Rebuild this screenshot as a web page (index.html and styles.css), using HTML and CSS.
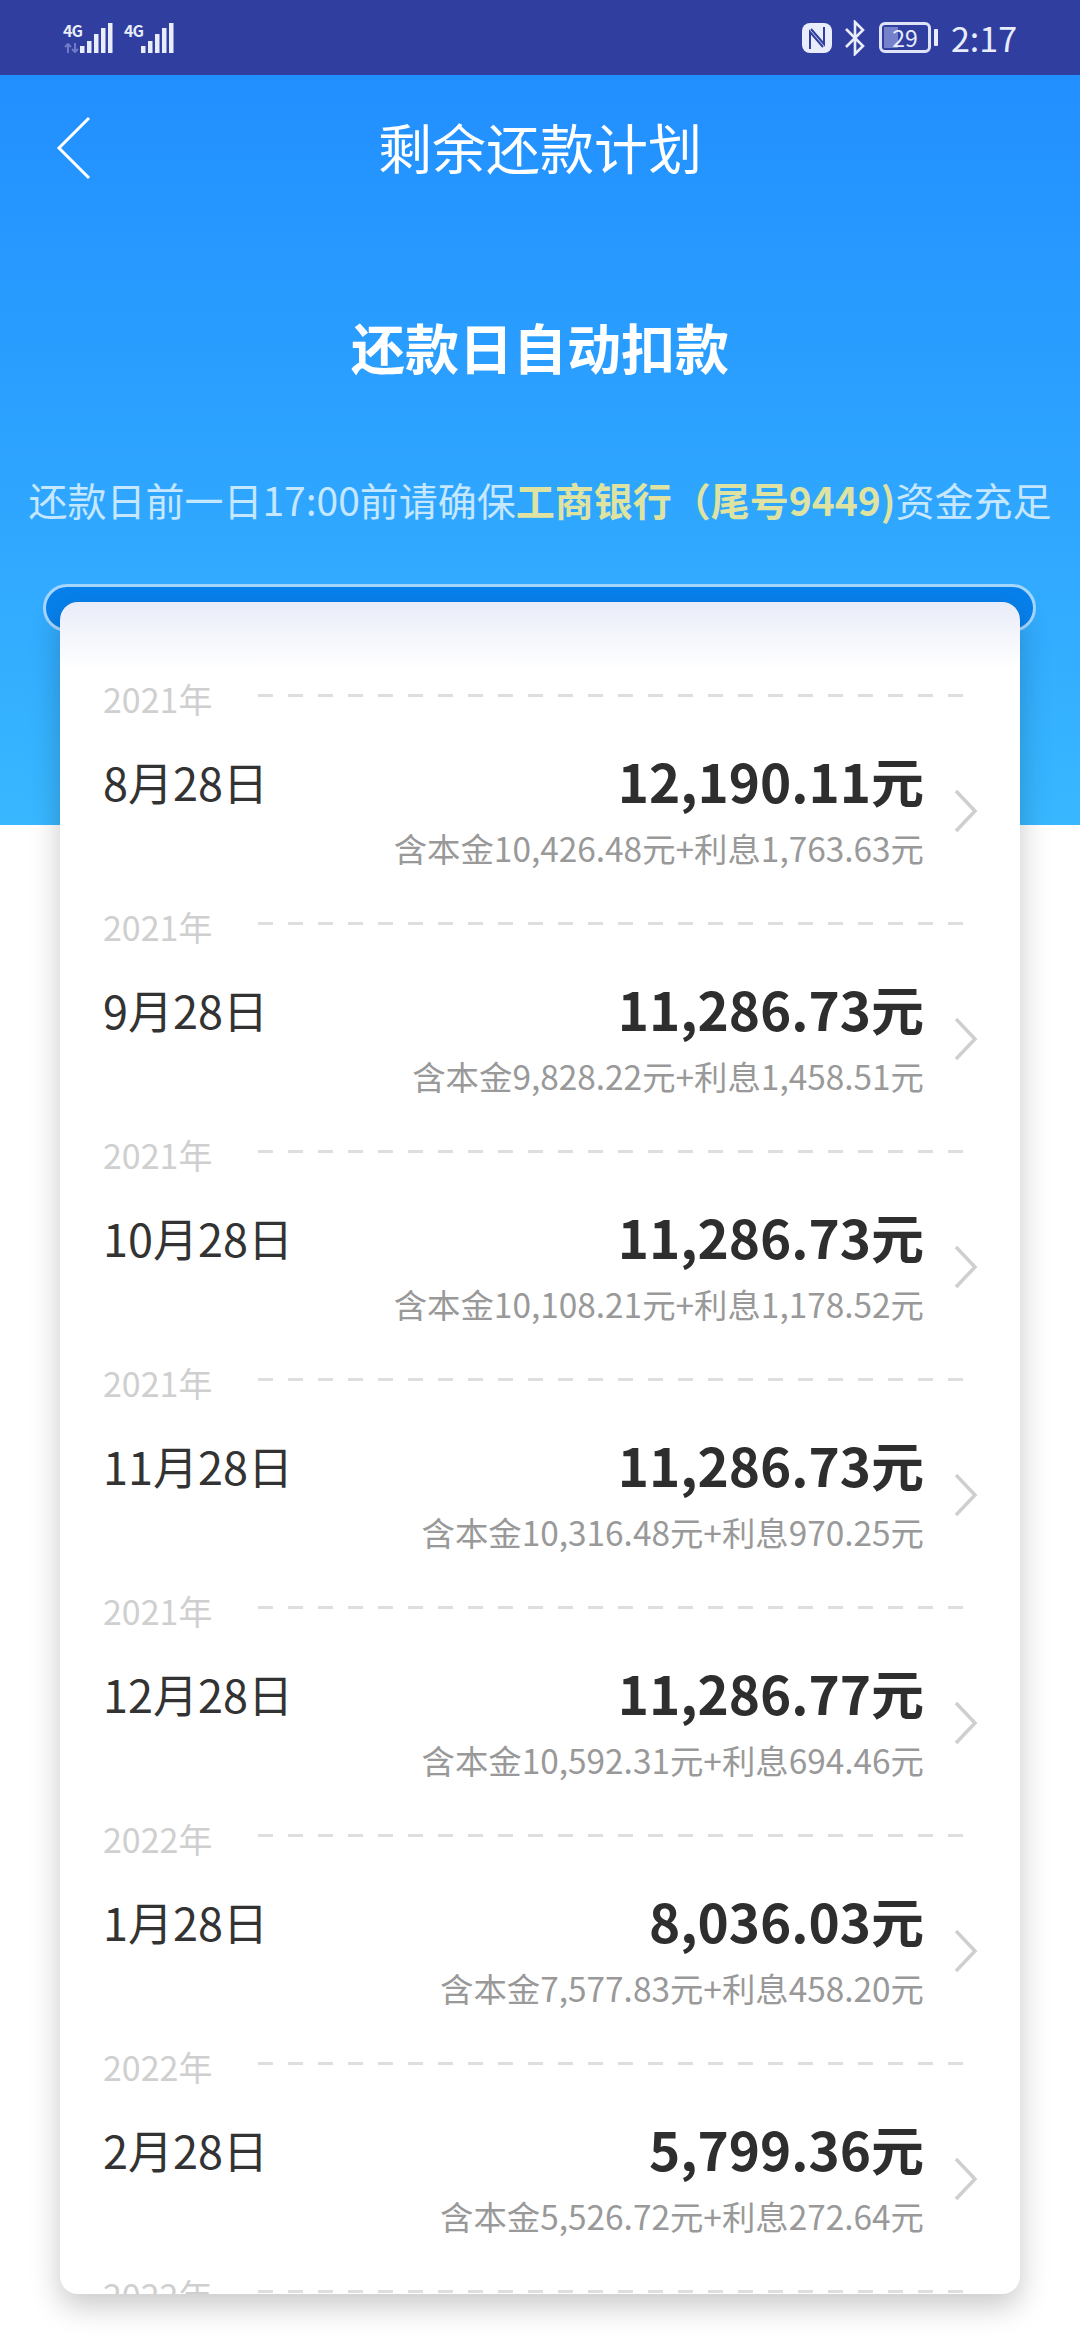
FILE: index.html
```html
<!DOCTYPE html>
<html lang="zh-CN">
<head>
    <meta charset="UTF-8">
    <meta name="viewport" content="width=device-width, initial-scale=1.0">
    <title>剩余还款计划</title>
    <link rel="stylesheet" href="styles.css">
</head>
<body>
    <div class="status-bar">
        <div class="status-left">
            <div class="sim">
                <div class="sim-label">
                    <span class="sim-text">4G</span>
                    <svg class="sim-arrows" width="17" height="10" viewBox="0 0 17 10"><path d="M5 10V1M2 4l3-3 3 3M12 0v9M9 6l3 3 3-3" fill="none" stroke="#6f7bc4" stroke-width="2"/></svg>
                </div>
                <svg width="33" height="30" viewBox="0 0 33 30"><path d="M0 23h4.5v7H0zM7 18h4.5v12H7zM14 11h4.5v19H14zM21 5h4.5v25H21zM28 0h4.5v30H28z" fill="#e8ecfb"/></svg>
            </div>
            <div class="sim">
                <div class="sim-label">
                    <span class="sim-text">4G</span>
                    <svg class="sim-arrows" width="17" height="10" viewBox="0 0 17 10"></svg>
                </div>
                <svg width="33" height="30" viewBox="0 0 33 30"><path d="M0 23h4.5v7H0zM7 18h4.5v12H7zM14 11h4.5v19H14zM21 5h4.5v25H21zM28 0h4.5v30H28z" fill="#e8ecfb"/></svg>
            </div>
        </div>
        <div class="status-right">
            <svg width="30" height="30" viewBox="0 0 30 30"><rect width="30" height="30" rx="8" fill="#e8ecfb"/><path d="M8 26V9l13 15M22 4v17L9 6" fill="none" stroke="#303f9f" stroke-width="2"/></svg>
            <svg class="bt" width="22" height="36" viewBox="0 0 22 36"><path d="M2 9l17 17-8 8V2l8 8L2 27" fill="none" stroke="#e8ecfb" stroke-width="2.6"/></svg>
            <div class="battery">
                <div class="battery-box">
                    <span class="battery-fill"></span>
                    <span class="battery-text">29</span>
                </div>
                <span class="battery-nub"></span>
            </div>
            <span class="clock">2:17</span>
        </div>
    </div>

    <div class="nav">
        <svg class="back" width="36" height="64" viewBox="0 0 36 64"><path d="M33 2L3 32l30 30" fill="none" stroke="#fff" stroke-width="3"/></svg>
        <span class="nav-title">剩余还款计划</span>
    </div>

    <h1 class="headline">还款日自动扣款</h1>
    <p class="notice">还款日前一日17:00前请确保<b class="bank">工商银行（尾号9449)</b>资金充足</p>

    <div class="slot"></div>

    <div class="plan-card">
        <div class="period">
            <div class="year-line"><span class="year">2021年</span><span class="dash"></span></div>
            <div class="row">
                <span class="date">8月28日</span>
                <div class="amounts">
                    <div class="amount">12,190.11元</div>
                    <div class="detail">含本金10,426.48元+利息1,763.63元</div>
                </div>
                <svg class="chevron" width="24" height="44" viewBox="0 0 24 44"><path d="M2 2l19 20L2 42" fill="none" stroke="#cfcfcf" stroke-width="3.5"/></svg>
            </div>
        </div>
        <div class="period">
            <div class="year-line"><span class="year">2021年</span><span class="dash"></span></div>
            <div class="row">
                <span class="date">9月28日</span>
                <div class="amounts">
                    <div class="amount">11,286.73元</div>
                    <div class="detail">含本金9,828.22元+利息1,458.51元</div>
                </div>
                <svg class="chevron" width="24" height="44" viewBox="0 0 24 44"><path d="M2 2l19 20L2 42" fill="none" stroke="#cfcfcf" stroke-width="3.5"/></svg>
            </div>
        </div>
        <div class="period">
            <div class="year-line"><span class="year">2021年</span><span class="dash"></span></div>
            <div class="row">
                <span class="date">10月28日</span>
                <div class="amounts">
                    <div class="amount">11,286.73元</div>
                    <div class="detail">含本金10,108.21元+利息1,178.52元</div>
                </div>
                <svg class="chevron" width="24" height="44" viewBox="0 0 24 44"><path d="M2 2l19 20L2 42" fill="none" stroke="#cfcfcf" stroke-width="3.5"/></svg>
            </div>
        </div>
        <div class="period">
            <div class="year-line"><span class="year">2021年</span><span class="dash"></span></div>
            <div class="row">
                <span class="date">11月28日</span>
                <div class="amounts">
                    <div class="amount">11,286.73元</div>
                    <div class="detail">含本金10,316.48元+利息970.25元</div>
                </div>
                <svg class="chevron" width="24" height="44" viewBox="0 0 24 44"><path d="M2 2l19 20L2 42" fill="none" stroke="#cfcfcf" stroke-width="3.5"/></svg>
            </div>
        </div>
        <div class="period">
            <div class="year-line"><span class="year">2021年</span><span class="dash"></span></div>
            <div class="row">
                <span class="date">12月28日</span>
                <div class="amounts">
                    <div class="amount">11,286.77元</div>
                    <div class="detail">含本金10,592.31元+利息694.46元</div>
                </div>
                <svg class="chevron" width="24" height="44" viewBox="0 0 24 44"><path d="M2 2l19 20L2 42" fill="none" stroke="#cfcfcf" stroke-width="3.5"/></svg>
            </div>
        </div>
        <div class="period">
            <div class="year-line"><span class="year">2022年</span><span class="dash"></span></div>
            <div class="row">
                <span class="date">1月28日</span>
                <div class="amounts">
                    <div class="amount">8,036.03元</div>
                    <div class="detail">含本金7,577.83元+利息458.20元</div>
                </div>
                <svg class="chevron" width="24" height="44" viewBox="0 0 24 44"><path d="M2 2l19 20L2 42" fill="none" stroke="#cfcfcf" stroke-width="3.5"/></svg>
            </div>
        </div>
        <div class="period">
            <div class="year-line"><span class="year">2022年</span><span class="dash"></span></div>
            <div class="row">
                <span class="date">2月28日</span>
                <div class="amounts">
                    <div class="amount">5,799.36元</div>
                    <div class="detail">含本金5,526.72元+利息272.64元</div>
                </div>
                <svg class="chevron" width="24" height="44" viewBox="0 0 24 44"><path d="M2 2l19 20L2 42" fill="none" stroke="#cfcfcf" stroke-width="3.5"/></svg>
            </div>
        </div>
        <div class="period">
            <div class="year-line"><span class="year">2022年</span><span class="dash"></span></div>
        </div>
    </div>
</body>
</html>
```

FILE: styles.css
```css
* {
    box-sizing: border-box;
}
html {
    height: 100%;
}
body {
    margin: 0;
    height: 2340px;
    overflow: hidden;
    font-family: "Noto Sans CJK SC", "Noto Sans", sans-serif;
    background-color: #fff;
    background-image: linear-gradient(#1f8bff, #38b7ff);
    background-size: 100% 825px;
    background-repeat: no-repeat;
}
.status-bar {
    height: 75px;
    background-color: #303f9f;
    display: flex;
    justify-content: space-between;
    align-items: center;
    padding: 0 63px;
    color: #e8ecfb;
}
.status-left {
    display: flex;
    gap: 11px;
}
.sim {
    display: flex;
    align-items: flex-end;
}
.sim-label {
    width: 17px;
    display: flex;
    flex-direction: column;
    gap: 6px;
}
.sim-text {
    font-size: 16px;
    line-height: 14px;
    font-weight: 700;
    letter-spacing: -1px;
    white-space: nowrap;
}
.status-right {
    display: flex;
    align-items: center;
}
.bt {
    margin-left: 12px;
}
.battery {
    display: flex;
    align-items: center;
    margin-left: 13px;
    gap: 3px;
}
.battery-box {
    position: relative;
    width: 52px;
    height: 31px;
    border: 3px solid #dfe3f8;
    border-radius: 6px;
    display: flex;
    align-items: center;
    justify-content: center;
}
.battery-fill {
    position: absolute;
    left: 2px;
    top: 2px;
    bottom: 2px;
    width: 14px;
    background-color: #7582cb;
}
.battery-text {
    position: relative;
    font-size: 23px;
    line-height: 25px;
}
.battery-nub {
    width: 4px;
    height: 17px;
    background-color: #e8ecfb;
    border-radius: 1px;
}
.clock {
    margin-left: 13px;
    font-size: 34px;
    line-height: 40px;
    font-weight: 400;
}
.nav {
    height: 150px;
    padding-bottom: 6px;
    display: flex;
    align-items: center;
    justify-content: center;
    position: relative;
}
.back {
    position: absolute;
    left: 56px;
    top: 41px;
}
.nav-title {
    color: #fff;
    font-size: 54px;
    line-height: 60px;
}
.headline {
    margin: 90px 0 0;
    text-align: center;
    color: #fff;
    font-size: 54px;
    line-height: 64px;
    font-weight: 700;
}
.notice {
    margin: 98px 0 0;
    text-align: center;
    white-space: nowrap;
    color: #c5e7ff;
    font-size: 39px;
    line-height: 44px;
}
.bank {
    color: #dfe3a2;
    font-weight: 700;
}
.slot {
    margin: 63px 44px 0 43px;
    height: 48px;
    border: 3px solid #a5d6ff;
    border-radius: 24px;
    background-color: #0780ec;
}
.plan-card {
    margin: -30px 60px 0;
    height: 1692px;
    overflow: hidden;
    border-radius: 18px;
    background-color: #fff;
    background-image: linear-gradient(#e8ecf8, #fff 66px);
    box-shadow: 0 12px 30px rgba(0, 0, 0, 0.22);
    padding-top: 78px;
    position: relative;
}
.period {
    height: 228px;
    padding-left: 43px;
}
.year-line {
    display: flex;
    align-items: flex-start;
    height: 58px;
}
.year {
    width: 155px;
    margin-top: -3px;
    font-size: 34px;
    line-height: 44px;
    color: #cfcfcf;
}
.dash {
    width: 706px;
    height: 3px;
    margin-top: 14px;
    background-image: repeating-linear-gradient(to right, #dedede 0, #dedede 15px, transparent 15px, transparent 30px);
}
.row {
    display: flex;
    align-items: flex-start;
    padding-right: 42px;
}
.date {
    font-size: 45px;
    line-height: 56px;
    margin-top: 16px;
    color: #333;
}
.amounts {
    margin-left: auto;
    margin-top: 12px;
    text-align: right;
}
.amount {
    font-size: 53px;
    line-height: 60px;
    font-weight: 700;
    color: #2e2e2e;
}
.detail {
    margin-top: 18px;
    font-size: 33.4px;
    line-height: 40px;
    color: #999;
}
.chevron {
    margin: 51px 0 0 30px;
}
```
